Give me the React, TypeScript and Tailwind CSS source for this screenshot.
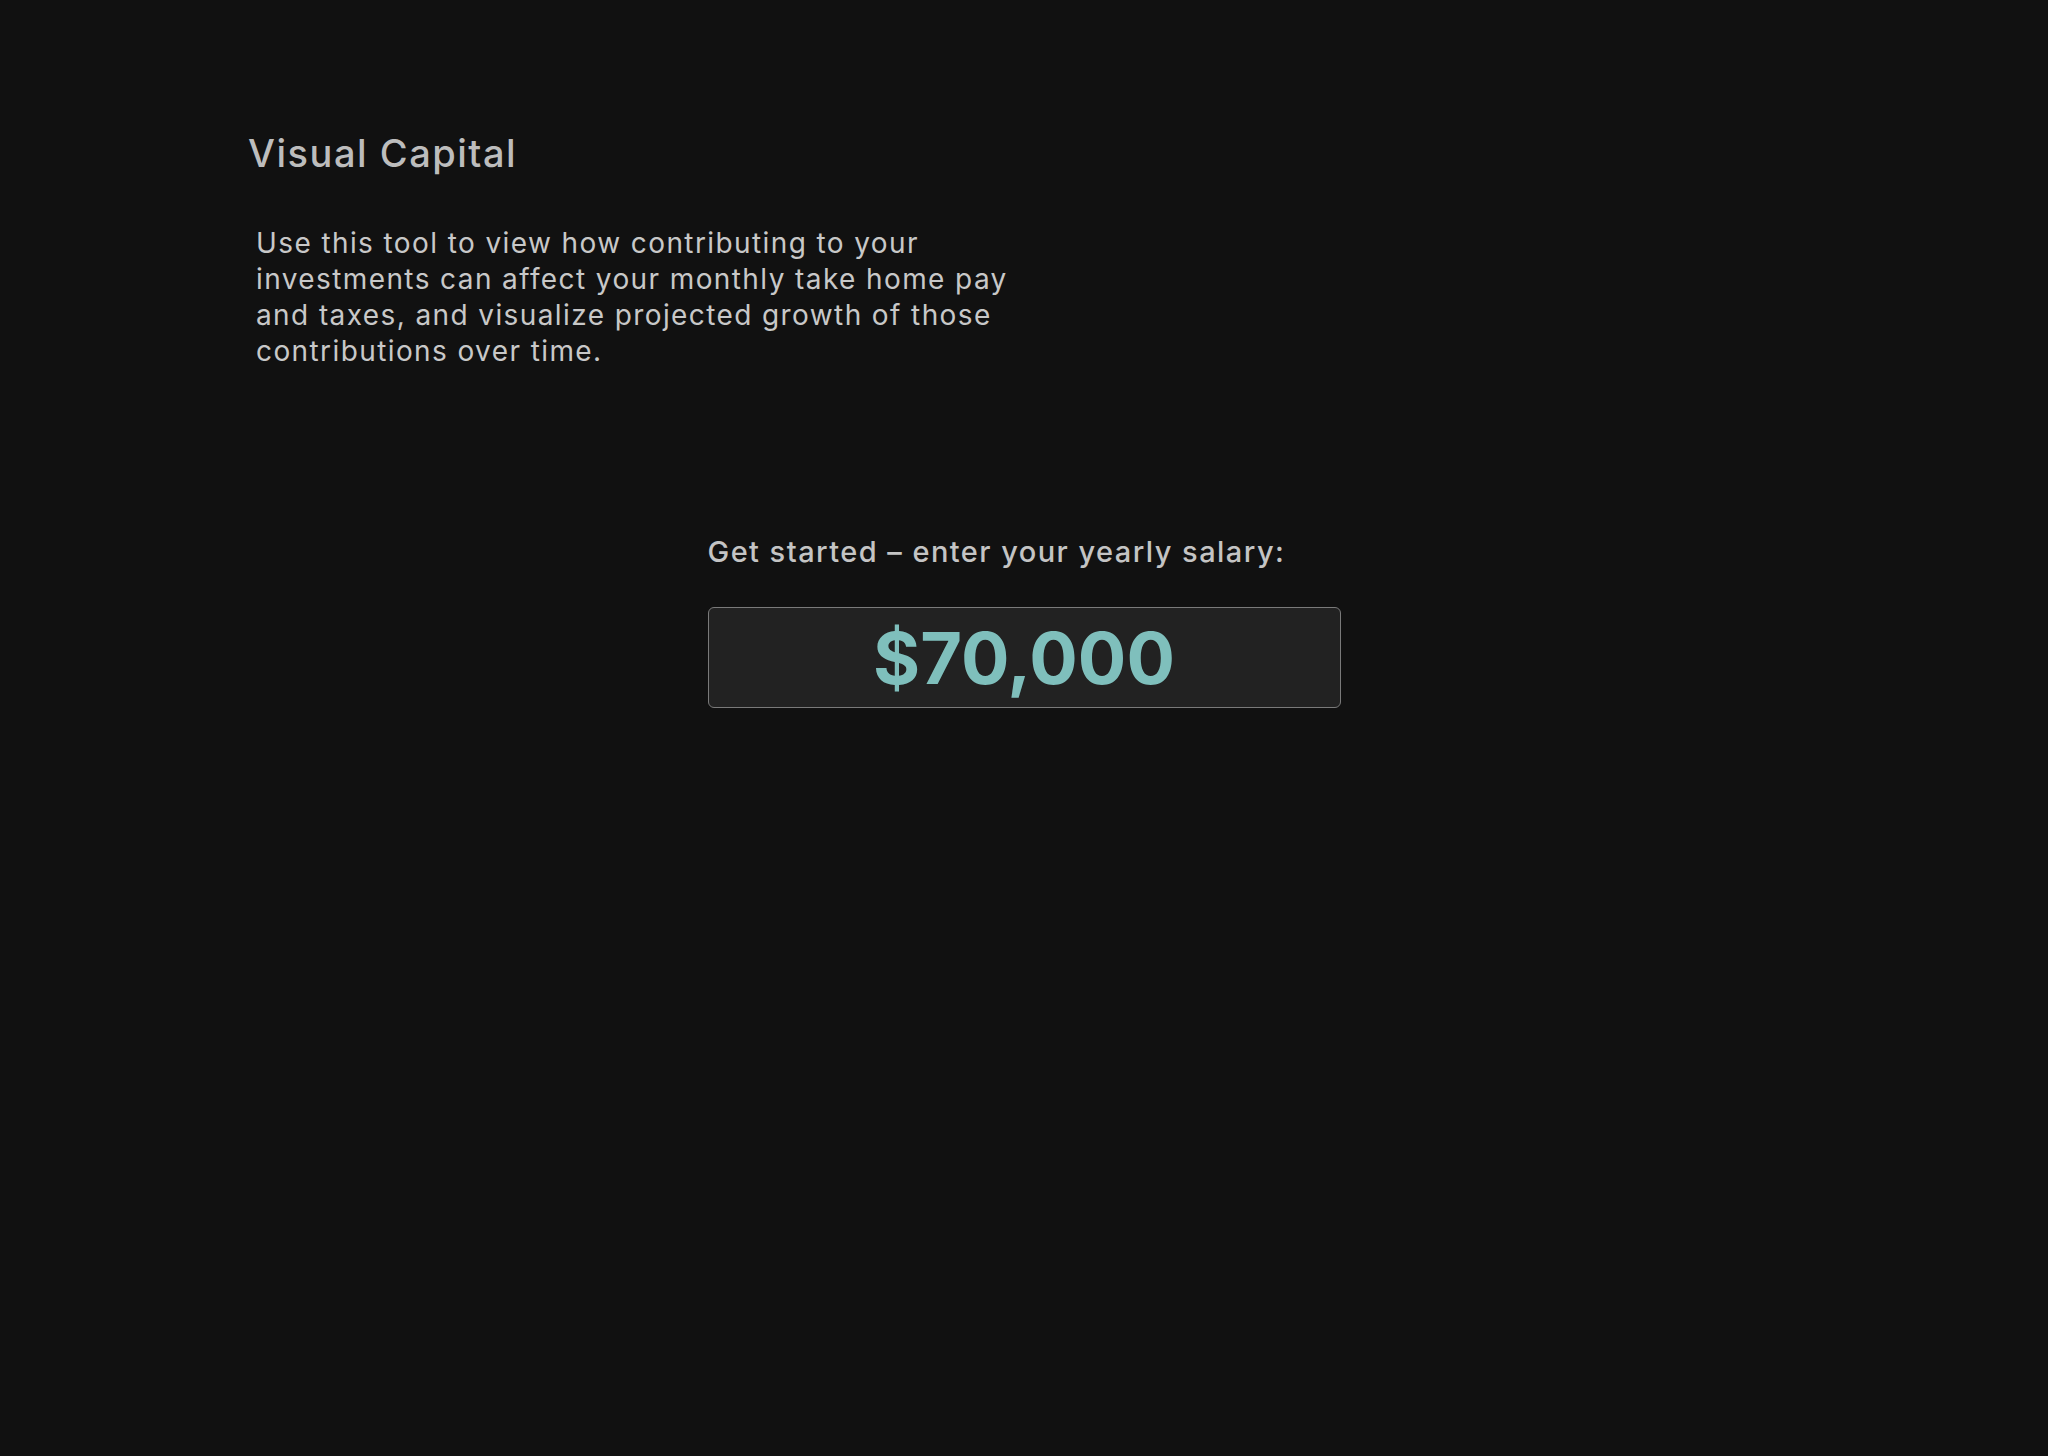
import { useState } from 'react';

function App() {
  const [salary, setSalary] = useState('$70,000');

  return (
    <div className="min-h-screen w-full bg-[#111111] font-['Inter','Roboto',sans-serif] text-[#c4c4c4]">
      <div className="pl-[248px] pt-[129px]">
        <h1 className="text-[38px] leading-[48px] font-medium text-[#bdbdbd] tracking-[0.04em]">Visual Capital</h1>
        <p className="mt-[48px] ml-[8px] max-w-[790px] text-[28px] leading-[36px] tracking-[0.05em] text-[#c8c8c8]">
          Use this tool to view how contributing to your investments can affect your monthly take home pay and taxes, and visualize projected growth of those contributions over time.
        </p>
      </div>

      <div className="mx-auto mt-[165px] w-[633px]">
        <label htmlFor="salary" className="block text-[29px] leading-[36px] font-medium tracking-[0.05em] text-[#c4c4c4]">
          Get started – enter your yearly salary:
        </label>
        <input
          id="salary"
          value={salary}
          onChange={(e) => setSalary(e.target.value)}
          className="mt-[37px] block h-[101px] w-full rounded-[6px] border border-[#7a7a7a] bg-[#222222] text-center text-[72px] font-bold text-[#7fbfbc] outline-none"
        />
      </div>
    </div>
  );
}

export default App;
